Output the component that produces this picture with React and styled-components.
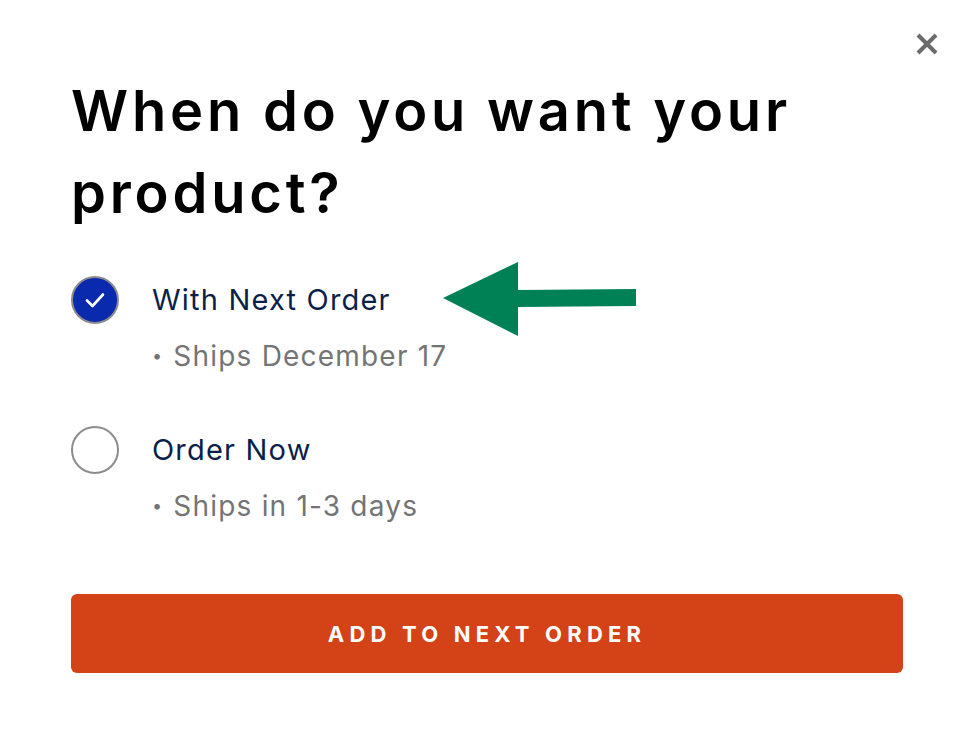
import React, { useState } from 'react';
import styled, { createGlobalStyle } from 'styled-components';

const GlobalStyle = createGlobalStyle`
  html, body {
    margin: 0;
    padding: 0;
    background: #ffffff;
  }
  * { box-sizing: border-box; }
`;

const Modal = styled.div`
  position: relative;
  width: 972px;
  height: 746px;
  padding: 70px 69px 0 71px;
  font-family: Inter, "Noto Sans", sans-serif;
`;

const CloseButton = styled.button`
  position: absolute;
  top: 32px;
  right: 33px;
  width: 24px;
  height: 24px;
  padding: 0;
  border: none;
  background: none;
  cursor: pointer;
`;

const Title = styled.h1`
  margin: 0;
  font-family: Inter, sans-serif;
  font-weight: 600;
  font-size: 56px;
  line-height: 82px;
  letter-spacing: 3.8px;
  color: #000;
  width: 800px;
`;

const Options = styled.div`
  margin-top: 42px;
  display: flex;
  flex-direction: column;
  gap: 54px;
`;

const Option = styled.label`
  display: grid;
  grid-template-columns: 48px 1fr;
  column-gap: 33px;
  align-items: center;
  cursor: pointer;
`;

const Radio = styled.span`
  width: 48px;
  height: 48px;
  border-radius: 50%;
  border: 2px solid #8c8c8c;
  background: ${p => (p.checked ? '#0a2aad' : '#fff')};
  display: flex;
  align-items: center;
  justify-content: center;
`;

const Label = styled.span`
  font-size: 29px;
  color: #0b1f4b;
  line-height: 34px;
  letter-spacing: 1.2px;
`;

const Sub = styled.span`
  grid-column: 2;
  margin-top: 16px;
  font-size: 28px;
  color: #747474;
  line-height: 32px;
  letter-spacing: 1.2px;
`;

const Dot = styled.span`
  font-size: 18px;
  margin-right: 10px;
  vertical-align: 4px;
`;

const Submit = styled.button`
  margin-top: 72px;
  width: 832px;
  height: 79px;
  border: none;
  border-radius: 6px;
  background: #d44217;
  color: #fff;
  font-family: Inter, sans-serif;
  font-weight: 700;
  font-size: 22px;
  letter-spacing: 5.2px;
  cursor: pointer;
`;

const Arrow = styled.svg`
  position: absolute;
  left: 440px;
  top: 260px;
`;

const options = [
  { id: 'next', label: 'With Next Order', sub: 'Ships December 17' },
  { id: 'now', label: 'Order Now', sub: 'Ships in 1-3 days' },
];

export default function App() {
  const [selected, setSelected] = useState('next');
  return (
    <>
      <GlobalStyle />
      <Modal>
        <CloseButton aria-label="Close">
          <svg width="24" height="24" viewBox="0 0 24 24">
            <path d="M3 3 L21 21 M21 3 L3 21" stroke="#6b6b6b" strokeWidth="4" strokeLinecap="butt" />
          </svg>
        </CloseButton>
        <Title>When do you want your product?</Title>
        <Options>
          {options.map(o => (
            <Option key={o.id} onClick={() => setSelected(o.id)}>
              <Radio checked={selected === o.id}>
                {selected === o.id && (
                  <svg width="22" height="22" viewBox="0 0 22 22">
                    <path d="M3 11.5 L8.5 17 L19 5.5" fill="none" stroke="#fff" strokeWidth="2.6" strokeLinecap="round" strokeLinejoin="round" />
                  </svg>
                )}
              </Radio>
              <Label>{o.label}</Label>
              <Sub><Dot>•</Dot>{o.sub}</Sub>
            </Option>
          ))}
        </Options>
        <Submit>ADD TO NEXT ORDER</Submit>
        <Arrow width="200" height="80" viewBox="0 0 200 80">
          <polygon points="3,38 78,2 78,30 196,29 196,46 78,47 78,76" fill="#008055" />
        </Arrow>
      </Modal>
    </>
  );
}
